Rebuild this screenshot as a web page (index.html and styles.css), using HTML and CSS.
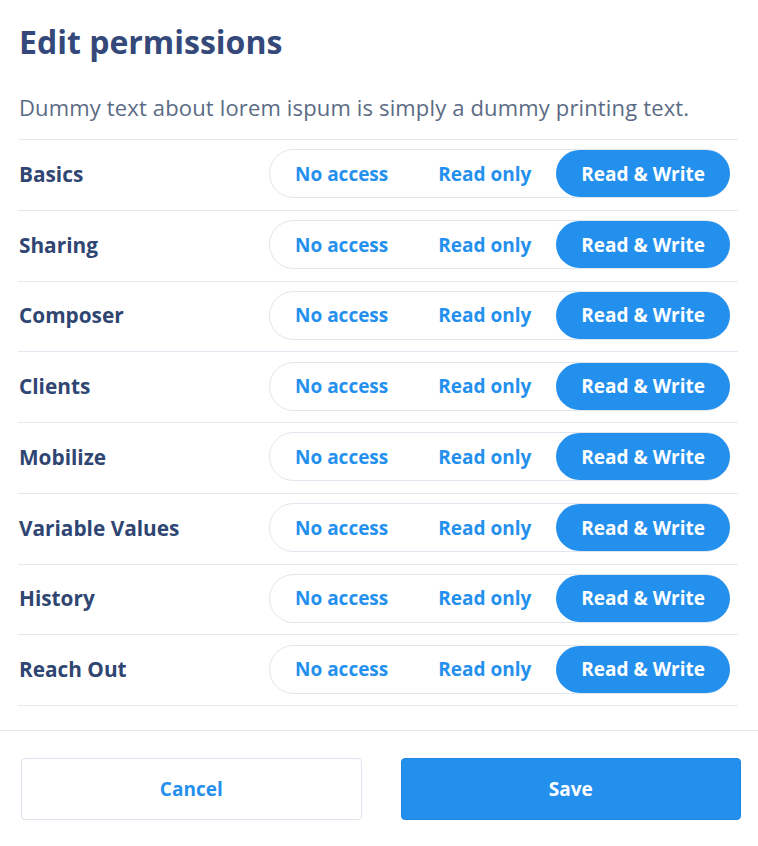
FILE: index.html
```html
<!DOCTYPE html>
<html lang="en">
<head>
<meta charset="utf-8">
<title>Edit permissions</title>
<link rel="stylesheet" href="styles.css">
</head>
<body>
<div class="dialog">
  <div class="content">
    <h1 class="title">Edit permissions</h1>
    <p class="desc">Dummy text about lorem ispum is simply a dummy printing text.</p>
    <ul class="rows">
      <li class="row"><span class="label">Basics</span><div class="toggle"><button class="opt">No access</button><button class="opt">Read only</button><button class="opt active">Read &amp; Write</button></div></li>
      <li class="row"><span class="label">Sharing</span><div class="toggle"><button class="opt">No access</button><button class="opt">Read only</button><button class="opt active">Read &amp; Write</button></div></li>
      <li class="row"><span class="label">Composer</span><div class="toggle"><button class="opt">No access</button><button class="opt">Read only</button><button class="opt active">Read &amp; Write</button></div></li>
      <li class="row"><span class="label">Clients</span><div class="toggle"><button class="opt">No access</button><button class="opt">Read only</button><button class="opt active">Read &amp; Write</button></div></li>
      <li class="row"><span class="label">Mobilize</span><div class="toggle"><button class="opt">No access</button><button class="opt">Read only</button><button class="opt active">Read &amp; Write</button></div></li>
      <li class="row"><span class="label">Variable Values</span><div class="toggle"><button class="opt">No access</button><button class="opt">Read only</button><button class="opt active">Read &amp; Write</button></div></li>
      <li class="row"><span class="label">History</span><div class="toggle"><button class="opt">No access</button><button class="opt">Read only</button><button class="opt active">Read &amp; Write</button></div></li>
      <li class="row"><span class="label">Reach Out</span><div class="toggle"><button class="opt">No access</button><button class="opt">Read only</button><button class="opt active">Read &amp; Write</button></div></li>
    </ul>
  </div>
  <div class="footer">
    <button class="btn btn-cancel">Cancel</button>
    <button class="btn btn-save">Save</button>
  </div>
</div>
</body>
</html>
```

FILE: styles.css
```css
* { box-sizing: border-box; }
html, body { margin: 0; padding: 0; background: #fff; }
body { font-family: "Open Sans", "Noto Sans", sans-serif; }

.dialog { width: 758px; }

.content { padding: 22px 20px 0 18px; }

.title {
  margin: 0 0 0 1px;
  font-size: 32px;
  line-height: 40px;
  font-weight: 700;
  color: #34497a;
}

.desc {
  margin: 30px 0 0 1px;
  font-size: 22px;
  line-height: 30px;
  letter-spacing: 0.15px;
  color: #5b6b85;
  padding-bottom: 17px;
  border-bottom: 1px solid #e1e8ef;
}

.rows { list-style: none; margin: 0; padding: 0; }

.row {
  display: flex;
  align-items: center;
  justify-content: space-between;
  height: 70.75px;
  padding: 0 8px 2px 1px;
  border-bottom: 1px solid #e1e8ef;
}

.label {
  font-size: 20.8px;
  font-weight: 700;
  color: #2f4572;
}

.toggle {
  display: flex;
  align-items: center;
  height: 49px;
  border: 1px solid #dfe6ee;
  border-radius: 25px;
}

.opt {
  height: 47px;
  padding: 0 25px;
  border: 0;
  background: transparent;
  font-family: inherit;
  font-size: 19px;
  font-weight: 700;
  color: #2490ee;
  border-radius: 24px;
  cursor: pointer;
}

.opt.active {
  background: #2490ee;
  color: #fff;
  margin-right: -1px;
}

.footer {
  display: flex;
  gap: 39px;
  margin-top: 24px;
  border-top: 1px solid #e1e8ef;
  padding: 27px 17px 25px 21px;
}

.btn {
  flex: 1;
  height: 62px;
  border-radius: 4px;
  font-family: inherit;
  font-size: 19px;
  font-weight: 700;
  cursor: pointer;
}

.btn-cancel {
  background: #fff;
  border: 1px solid #dde6ee;
  color: #2490ee;
}

.btn-save {
  background: #2490ee;
  border: 1px solid #1f86e0;
  color: #fff;
}
```
